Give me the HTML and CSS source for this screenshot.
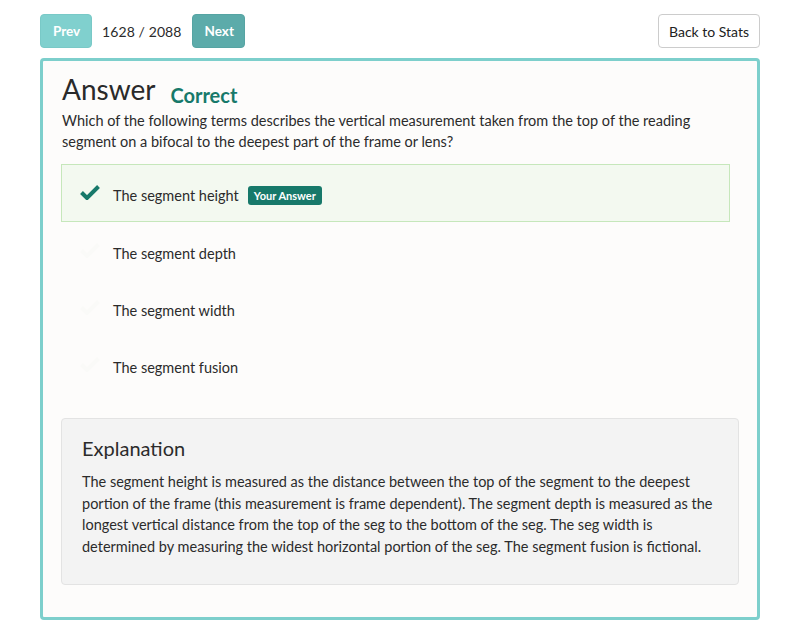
FILE: index.html
```html
<!DOCTYPE html>
<html>
<head>
<meta charset="utf-8">
<link rel="stylesheet" href="styles.css">
</head>
<body>
<div class="toolbar">
  <div class="pager">
    <button class="btn btn-prev">Prev</button>
    <span class="count">1628 / 2088</span>
    <button class="btn btn-next">Next</button>
  </div>
  <button class="btn btn-back">Back to Stats</button>
</div>
<div class="panel">
  <div class="title-row">
    <h1 class="title">Answer</h1>
    <span class="status">Correct</span>
  </div>
  <p class="question">Which of the following terms describes the vertical measurement taken from the top of the reading segment on a bifocal to the deepest part of the frame or lens?</p>
  <ul class="options">
    <li class="option selected">
      <svg class="check" viewBox="0 0 20 16" width="20" height="16"><path d="M1.5 8.5 L7 14 L18.5 2.5" fill="none" stroke="currentColor" stroke-width="4" stroke-linejoin="miter"/></svg>
      <span class="label">The segment height</span>
      <span class="badge">Your Answer</span>
    </li>
    <li class="option">
      <svg class="check faint" viewBox="0 0 20 16" width="20" height="16"><path d="M1.5 8.5 L7 14 L18.5 2.5" fill="none" stroke="currentColor" stroke-width="4"/></svg>
      <span class="label">The segment depth</span>
    </li>
    <li class="option">
      <svg class="check faint" viewBox="0 0 20 16" width="20" height="16"><path d="M1.5 8.5 L7 14 L18.5 2.5" fill="none" stroke="currentColor" stroke-width="4"/></svg>
      <span class="label">The segment width</span>
    </li>
    <li class="option">
      <svg class="check faint" viewBox="0 0 20 16" width="20" height="16"><path d="M1.5 8.5 L7 14 L18.5 2.5" fill="none" stroke="currentColor" stroke-width="4"/></svg>
      <span class="label">The segment fusion</span>
    </li>
  </ul>
  <div class="well">
    <h2 class="well-title">Explanation</h2>
    <p class="well-text">The segment height is measured as the distance between the top of the segment to the deepest portion of the frame (this measurement is frame dependent). The segment depth is measured as the longest vertical distance from the top of the seg to the bottom of the seg. The seg width is determined by measuring the widest horizontal portion of the seg. The segment fusion is fictional.</p>
  </div>
</div>
</body>
</html>
```

FILE: styles.css
```css
* { box-sizing: border-box; }
html, body { background: #ffffff; }
body {
  margin: 0;
  padding: 14px 40px 0 40px;
  font-family: "Lato", "Open Sans", sans-serif;
  font-size: 14.5px;
  color: #2b2b2b;
}
.toolbar {
  display: flex;
  justify-content: space-between;
  align-items: center;
  height: 34px;
}
.pager {
  display: flex;
  align-items: center;
  gap: 10px;
}
.btn {
  font-family: inherit;
  height: 34px;
  border-radius: 4px;
  font-size: 14px;
  padding: 0 12px;
  border: 1px solid transparent;
  cursor: pointer;
}
.btn-prev {
  width: 52px;
  background: #80d0ce;
  border-color: #79c9c7;
  color: #fff;
  font-weight: 700;
  font-size: 13.5px;
}
.btn-next {
  width: 53px;
  background: #5cabaa;
  border-color: #56a4a3;
  color: #fff;
  font-weight: 700;
  font-size: 13.5px;
}
.count {
  font-size: 14px;
  color: #2b2b2b;
  letter-spacing: 0.1px;
}
.btn-back {
  width: 102px;
  background: #fff;
  border-color: #cccccc;
  color: #222;
  padding: 0;
}
.panel {
  margin-top: 10px;
  border: 3px solid #7dcfcc;
  border-radius: 4px;
  background: #fdfcfb;
  padding: 10px 18px 32px 18px;
  height: 562px;
}
.title-row {
  display: flex;
  align-items: baseline;
  gap: 15px;
  margin-left: 1px;
}
.title {
  margin: 0;
  font-size: 28px;
  font-weight: 400;
  color: #2a2a2a;
  line-height: 36px;
}
.status {
  font-size: 20px;
  font-weight: 700;
  color: #17796a;
  position: relative;
  top: 3px;
}
.question {
  margin: 3px 0 0 1px;
  font-size: 14.5px;
  line-height: 21px;
  color: #2b2b2b;
  padding-right: 36px;
}
.options {
  list-style: none;
  margin: 12px 9px 0 0;
  padding: 0;
}
.option {
  display: flex;
  align-items: center;
  height: 58px;
  padding-left: 18px;
  padding-top: 4px;
  border: 1px solid transparent;
  margin-bottom: -1px;
}
.option.selected {
  background: #f3f9f0;
  border-color: #c6e7bb;
  margin-bottom: 0;
}
.check {
  color: #17796a;
  margin-right: 13px;
  margin-top: -6px;
  flex-shrink: 0;
}
.check.faint { color: #fafaf8; }
.label {
  font-size: 14.5px;
  color: #2b2b2b;
}
.badge {
  margin-left: 9px;
  background: #17796a;
  color: #fff;
  font-size: 11px;
  font-weight: 700;
  padding: 2px 6px;
  border-radius: 3px;
  line-height: 15px;
}
.well {
  margin-top: 25px;
  background: #f3f3f3;
  border: 1px solid #e3e3e3;
  border-radius: 4px;
  padding: 16px 20px 26px 20px;
  height: 167px;
}
.well-title {
  margin: 0;
  font-size: 20px;
  font-weight: 400;
  color: #2b2b2b;
  line-height: 26px;
}
.well-text {
  margin: 10px 0 0 0;
  font-size: 14.5px;
  line-height: 21.5px;
  color: #2b2b2b;
}
```
